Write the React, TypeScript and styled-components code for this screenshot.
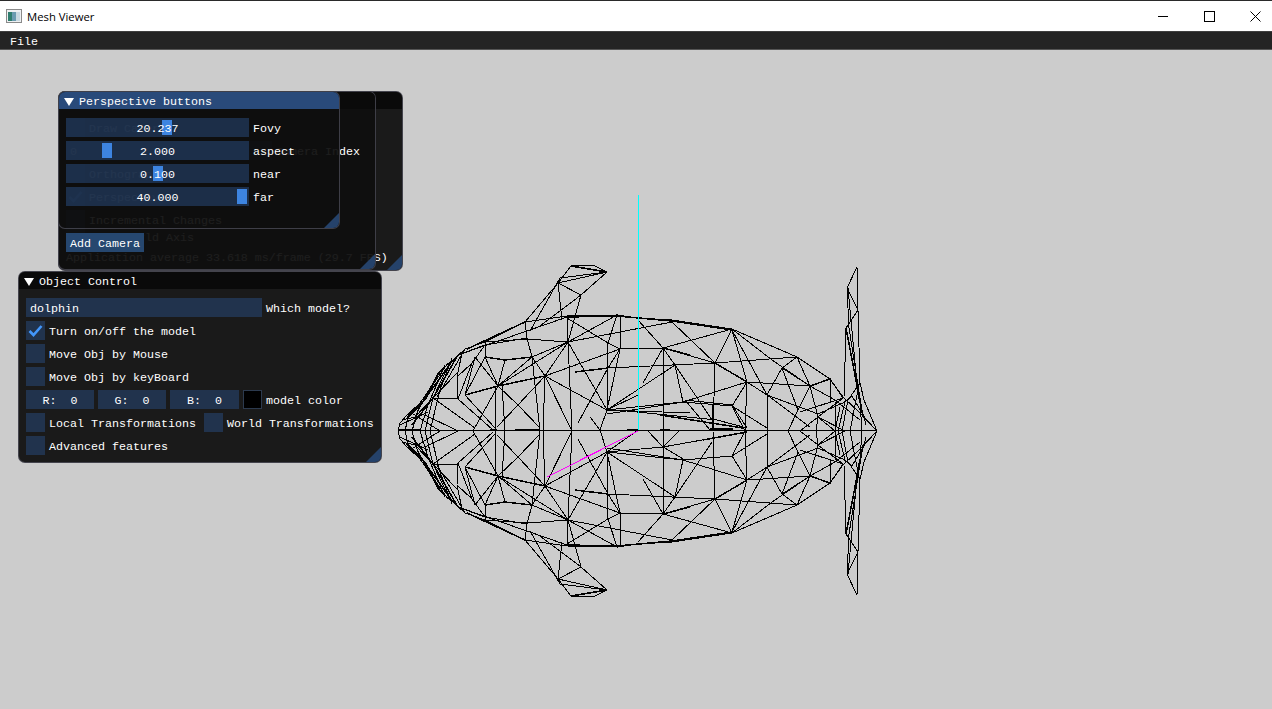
import * as React from 'react';
import styled, { createGlobalStyle } from 'styled-components';

const GlobalStyle = createGlobalStyle`
  html, body {
    margin: 0;
    height: 100%;
    overflow: hidden;
    background: #cccccc;
  }
`;

const UI_FONT = `"Liberation Mono", "DejaVu Sans Mono", monospace`;

const Page = styled.div`
  display: flex;
  flex-direction: column;
  width: 1272px;
  height: 709px;
  font-family: ${UI_FONT};
  font-size: 11.67px;
  color: #ffffff;
`;

const TitleBar = styled.div`
  display: flex;
  align-items: center;
  flex: none;
  height: 30px;
  padding-left: 6px;
  background: #ffffff;
  border-top: 1px solid #2a2a2a;
  color: #000000;
  font-family: "Open Sans", "Liberation Sans", sans-serif;
  font-size: 11.3px;
`;

const TitleText = styled.span`
  margin-left: 5px;
  flex: 1;
`;

const CaptionButton = styled.div`
  display: flex;
  align-items: center;
  justify-content: flex-end;
  box-sizing: border-box;
  width: 46px;
  height: 30px;
  padding-right: 11px;
`;

const MenuBar = styled.div`
  flex: none;
  height: 17px;
  padding-left: 10px;
  background: #242424;
  border-top: 1px solid #3f3f3f;
  border-bottom: 1px solid #555555;
  line-height: 20px;
`;

const Canvas = styled.div`
  position: relative;
  flex: 1;
  background: #cccccc;
`;

const MeshSvg = styled.svg`
  position: absolute;
  left: 0;
  top: 0;
  width: 1272px;
  height: 659px;
`;

const Window = styled.div<{ $x: number; $y: number; $w: number; $h: number }>`
  position: absolute;
  left: ${p => p.$x}px;
  top: ${p => p.$y - 50}px;
  width: ${p => p.$w}px;
  height: ${p => p.$h}px;
  box-sizing: border-box;
  overflow: hidden;
  background: rgba(15, 15, 15, 0.94);
  border: 1px solid rgba(110, 110, 128, 0.5);
  border-radius: 7px;
`;

const WindowTitle = styled.div<{ $active?: boolean }>`
  display: flex;
  align-items: center;
  box-sizing: border-box;
  height: 17px;
  padding: 2px 0 0 5px;
  gap: 5px;
  background: ${p => (p.$active ? '#294a7a' : '#0a0a0a')};
  white-space: pre;
`;

const Arrow = styled.span`
  width: 0;
  height: 0;
  border-left: 5px solid transparent;
  border-right: 5px solid transparent;
  border-top: 8px solid #ffffff;
`;

const WindowBody = styled.div<{ $top?: number; $rowGap?: number }>`
  display: flex;
  flex-direction: column;
  gap: ${p => p.$rowGap ?? 4}px;
  padding: ${p => p.$top ?? 9}px 0 0 7px;
`;

const Grip = styled.div`
  position: absolute;
  right: 0;
  bottom: 0;
  width: 0;
  height: 0;
  border-left: 15px solid transparent;
  border-bottom: 15px solid #25426a;
`;

const Row = styled.div`
  display: flex;
  align-items: center;
  height: 19px;
  white-space: pre;
`;

const Label = styled.span<{ $gap?: number }>`
  margin-left: ${p => p.$gap ?? 4}px;
  padding-top: 2px;
`;

const Frame = styled.div<{ $w: number }>`
  position: relative;
  display: flex;
  align-items: center;
  justify-content: center;
  flex: none;
  box-sizing: border-box;
  width: ${p => p.$w}px;
  height: 19px;
  padding-top: 2px;
  background: rgba(41, 74, 122, 0.54);
`;

const FrameText = styled.span`
  position: relative;
`;

const Grab = styled.div<{ $at: number }>`
  position: absolute;
  left: ${p => p.$at}px;
  top: 2px;
  width: 10px;
  height: 15px;
  background: #3d84e0;
`;

const TextInput = styled(Frame)`
  justify-content: flex-start;
  padding-left: 4px;
`;

const ColorField = styled(Frame)`
  white-space: pre;
`;

const Swatch = styled.div`
  flex: none;
  width: 19px;
  height: 19px;
  margin-left: 4px;
  box-sizing: border-box;
  background: #000000;
  border: 1px solid #2c3a4e;
`;

const Box = styled.div<{ $gapLeft?: number }>`
  display: flex;
  align-items: center;
  justify-content: center;
  flex: none;
  width: 19px;
  height: 19px;
  margin-left: ${p => p.$gapLeft ?? 0}px;
  background: rgba(41, 74, 122, 0.54);
`;

const Button = styled.div`
  display: flex;
  align-items: center;
  justify-content: center;
  box-sizing: border-box;
  width: 78px;
  height: 19px;
  padding-top: 2px;
  background: #26476f;
`;

const Check = () => (
  <svg width="15" height="13" viewBox="0 0 15 13">
    <path d="M1.5 7 L5.5 11 L13.5 2" fill="none" stroke="#4296fa" strokeWidth="2.6" />
  </svg>
);

// top half of the dolphin wireframe, in page coordinates; the mesh is mirrored around y = 431
const HALF_MESH = [
  // outline
  '398,431 400,423 407,415 422,403 433,383 438,373 453,360 465,349 485,342 525,322 567,316 617,315 638,318 672,320 732,329 797,357 830,379 843,397 860,413 877,431',
  // front fin
  '525,322 558,283 571,266 593,265 607,272 558,283',
  '530,331 560,278 607,272',
  '571,266 607,272 581,295 558,283 562,320',
  '581,295 568,342',
  '581,295 540,326',
  '558,283 581,295',
  // upper rings
  '458,355 567,317',
  '485,342 527,339 568,342',
  '458,355 485,345 527,338',
  '525,322 527,338 532,357 568,342 567,316',
  '567,318 608,343 617,315 568,342',
  '568,342 672,322',
  '620,315 620,349 608,368',
  '608,343 620,349 663,348',
  '545,376 620,349 607,410',
  '485,342 485,357',
  '485,357 498,386 505,360',
  '532,357 498,386',
  '568,342 498,386',
  '532,357 545,376 568,342',
  '532,357 540,431',
  '472,363 458,399',
  '485,345 472,363 457,377',
  '462,353 457,377 458,399',
  '475,357 498,386',
  '475,357 465,395',
  '485,357 465,395',
  '608,343 607,410 568,342',
  '608,368 578,423',
  '545,376 607,410 683,402',
  '545,376 543,431',
  '568,342 572,431',
  '545,376 572,431',
  '498,386 518,405 540,428',
  '545,376 518,405 497,427',
  '495,386 495,431',
  '502,386 505,431',
  '465,395 495,428',
  '458,399 493,430',
  '433,398 475,428',
  '498,386 473,431',
  '433,398 458,398',
  '425,415 458,431',
  '433,398 425,431',
  '465,349 437,397',
  '450,362 433,398',
  '448,363 420,403',
  '440,371 422,403 415,417',
  '457,373 433,398 415,417 402,420',
  '420,403 412,431',
  '402,420 420,403',
  '408,418 405,431',
  '445,365 428,405 420,431',
  '452,358 440,390 430,431',
  '410,412 440,431',
  '400,425 428,412',
  // middle and rear of the body
  '638,320 663,348 732,329',
  '672,322 715,363',
  '663,348 715,363',
  '663,348 675,365 683,402',
  '675,365 712,420',
  '663,348 643,383',
  '663,348 663,431',
  '608,368 715,363',
  '675,365 607,410',
  '715,363 713,431',
  '732,329 715,363',
  '732,330 747,382 745,431',
  '732,330 767,395',
  '732,329 772,360 810,386',
  '797,357 715,363',
  '797,357 810,386',
  '797,357 782,368 767,395',
  '782,368 810,386',
  '782,368 798,410',
  '810,386 830,379 830,402',
  '810,386 798,410 788,431',
  '810,386 818,417 816,431',
  '747,382 810,386',
  '747,382 683,402 607,414',
  '747,382 732,406 745,431',
  '683,402 732,406 767,428',
  '767,395 767,431',
  '767,395 810,427',
  '767,395 818,414 845,402',
  '747,382 767,395',
  '830,379 843,398',
  '810,386 835,400 860,420',
  '843,398 800,412',
  '843,398 818,417 800,431',
  '835,402 835,431',
  '840,407 835,431',
  '818,417 835,431',
  '845,402 838,431',
  '818,417 845,431',
  // tail
  '857,267 847,288 858,310 846,328 844,397',
  '857,267 858,310 860,383',
  '847,288 849,328 863,417 877,431',
  '848,288 858,395 866,425',
  '846,328 860,402 862,431',
  '860,383 848,400 842,431',
  '860,383 864,400 877,431',
  '843,403 852,396 866,420',
  '857,395 850,431',
];

// where several edges run side by side the picture reads as a heavier line
const HALF_HEAVY = [
  '567,317 617,316 672,321 732,330',
  '498,386 545,376',
  '575,372 608,368',
  '663,348 690,355',
  '715,363 747,382',
  '485,357 505,360 532,357',
  '498,386 465,395',
  '830,379 810,386',
  '571,266 607,272',
  '846,328 863,417',
  '453,360 422,403 407,418',
  '458,355 433,398 412,425',
  '440,371 425,400',
  '525,322 467,349',
];

const toPath = (lines: string[]) => lines.map(line => 'M' + line.split(' ').join(' L')).join(' ');

const MESH_PATH = toPath(HALF_MESH);
const HEAVY_PATH = toPath(HALF_HEAVY);

// the dorsal fin and the axis line sit on the mirror line, so they are not doubled
const CENTER = toPath([
  '398,430 877,430',
  '607,410 690,413',
  '617,410 717,420 747,428',
  '607,452 663,447 747,432',
  '663,447 663,430',
  '663,447 647,430',
  '663,447 680,430',
  '663,447 685,460',
  '607,452 638,430',
  '607,452 600,430 590,417',
  '607,410 600,430',
  '607,410 638,395',
  '685,400 732,405 747,428',
  '685,400 710,430',
  '713,405 712,430',
]);

const CENTER_HEAVY = toPath([
  '398,430 420,430',
  '490,430 497,430',
  '515,430 540,430',
  '627,430 638,430',
  '660,430 670,430',
  '710,429 733,429',
  '660,415 743,428',
  '703,440 747,432',
]);

const Mesh = () => (
  <MeshSvg viewBox="0 50 1272 659">
    <g fill="none" stroke="#000000" strokeWidth="1" shapeRendering="crispEdges">
      <path d={MESH_PATH} />
      <path d={MESH_PATH} transform="matrix(1 0 0 -1 0 862)" />
      <path d={CENTER} />
    </g>
    <g fill="none" stroke="#000000" strokeWidth="1.5" shapeRendering="crispEdges">
      <path d={HEAVY_PATH} />
      <path d={HEAVY_PATH} transform="matrix(1 0 0 -1 0 862)" />
      <path d={CENTER_HEAVY} />
    </g>
    <g fill="none" strokeWidth="1" shapeRendering="crispEdges">
      <path d="M638.5,195 L638.5,430" stroke="#00ffff" strokeWidth="1.4" />
      <path d="M638,431 L547,477" stroke="#ff00ff" />
    </g>
  </MeshSvg>
);

const SLIDERS = [
  { value: '20.237', grab: 96, label: 'Fovy' },
  { value: '2.000', grab: 36, label: 'aspect' },
  { value: '0.100', grab: 87, label: 'near' },
  { value: '40.000', grab: 171, label: 'far' },
];

const App = () => (
  <Page>
    <GlobalStyle />
    <TitleBar>
      <svg width="16" height="14" viewBox="0 0 16 14">
        <rect x="0.5" y="0.5" width="15" height="13" fill="#eef0f2" stroke="#8a8a8a" />
        <rect x="2" y="3" width="4" height="9" fill="#2e7d6e" />
        <rect x="6" y="3" width="4" height="9" fill="#6a9bb0" />
        <rect x="10" y="3" width="4" height="9" fill="#c8d8e0" />
      </svg>
      <TitleText>Mesh Viewer</TitleText>
      <CaptionButton>
        <svg width="11" height="11" viewBox="0 0 11 11">
          <path d="M0 5.5 H10" stroke="#000" fill="none" />
        </svg>
      </CaptionButton>
      <CaptionButton>
        <svg width="11" height="11" viewBox="0 0 11 11">
          <rect x="0.5" y="0.5" width="10" height="10" stroke="#000" fill="none" />
        </svg>
      </CaptionButton>
      <CaptionButton>
        <svg width="11" height="11" viewBox="0 0 11 11">
          <path d="M0.5 0.5 L10.5 10.5 M10.5 0.5 L0.5 10.5" stroke="#000" fill="none" />
        </svg>
      </CaptionButton>
    </TitleBar>
    <MenuBar>File</MenuBar>
    <Canvas>
      <Mesh />

      <Window $x={58} $y={91} $w={345} $h={180}>
        <WindowTitle />
        <WindowBody $top={118} $rowGap={1}>
          <Row>
            <Box />
            <Label>Draw World Axis</Label>
          </Row>
          <Row>
            <Label $gap={0}>Application average 33.618 ms/frame (29.7 FPS)</Label>
          </Row>
        </WindowBody>
        <Grip />
      </Window>

      <Window $x={58} $y={91} $w={318} $h={179}>
        <WindowTitle />
        <WindowBody>
          <Row>
            <Box />
            <Label>Draw Camera</Label>
          </Row>
          <Row>
            <TextInput $w={206}>0</TextInput>
            <Label>Camera Index</Label>
          </Row>
          <Row>
            <Box />
            <Label>Orthographic</Label>
          </Row>
          <Row>
            <Box>
              <Check />
            </Box>
            <Label>Perspective</Label>
          </Row>
          <Row>
            <Box />
            <Label>Incremental Changes</Label>
          </Row>
          <Row>
            <Button>Add Camera</Button>
          </Row>
        </WindowBody>
        <Grip />
      </Window>

      <Window $x={58} $y={91} $w={282} $h={138}>
        <WindowTitle $active>
          <Arrow />
          Perspective buttons
        </WindowTitle>
        <WindowBody>
          {SLIDERS.map(s => (
            <Row key={s.label}>
              <Frame $w={183}>
                <Grab $at={s.grab} />
                <FrameText>{s.value}</FrameText>
              </Frame>
              <Label>{s.label}</Label>
            </Row>
          ))}
        </WindowBody>
        <Grip />
      </Window>

      <Window $x={18} $y={271} $w={364} $h={192}>
        <WindowTitle>
          <Arrow />
          Object Control
        </WindowTitle>
        <WindowBody>
          <Row>
            <TextInput $w={236}>dolphin</TextInput>
            <Label>Which model?</Label>
          </Row>
          <Row>
            <Box>
              <Check />
            </Box>
            <Label>Turn on/off the model</Label>
          </Row>
          <Row>
            <Box />
            <Label>Move Obj by Mouse</Label>
          </Row>
          <Row>
            <Box />
            <Label>Move Obj by keyBoard</Label>
          </Row>
          <Row>
            <ColorField $w={68}>R:  0</ColorField>
            <Label />
            <ColorField $w={68}>G:  0</ColorField>
            <Label />
            <ColorField $w={69}>B:  0</ColorField>
            <Swatch />
            <Label>model color</Label>
          </Row>
          <Row>
            <Box />
            <Label>Local Transformations</Label>
            <Box $gapLeft={8} />
            <Label>World Transformations</Label>
          </Row>
          <Row>
            <Box />
            <Label>Advanced features</Label>
          </Row>
        </WindowBody>
        <Grip />
      </Window>
    </Canvas>
  </Page>
);

export default App;
